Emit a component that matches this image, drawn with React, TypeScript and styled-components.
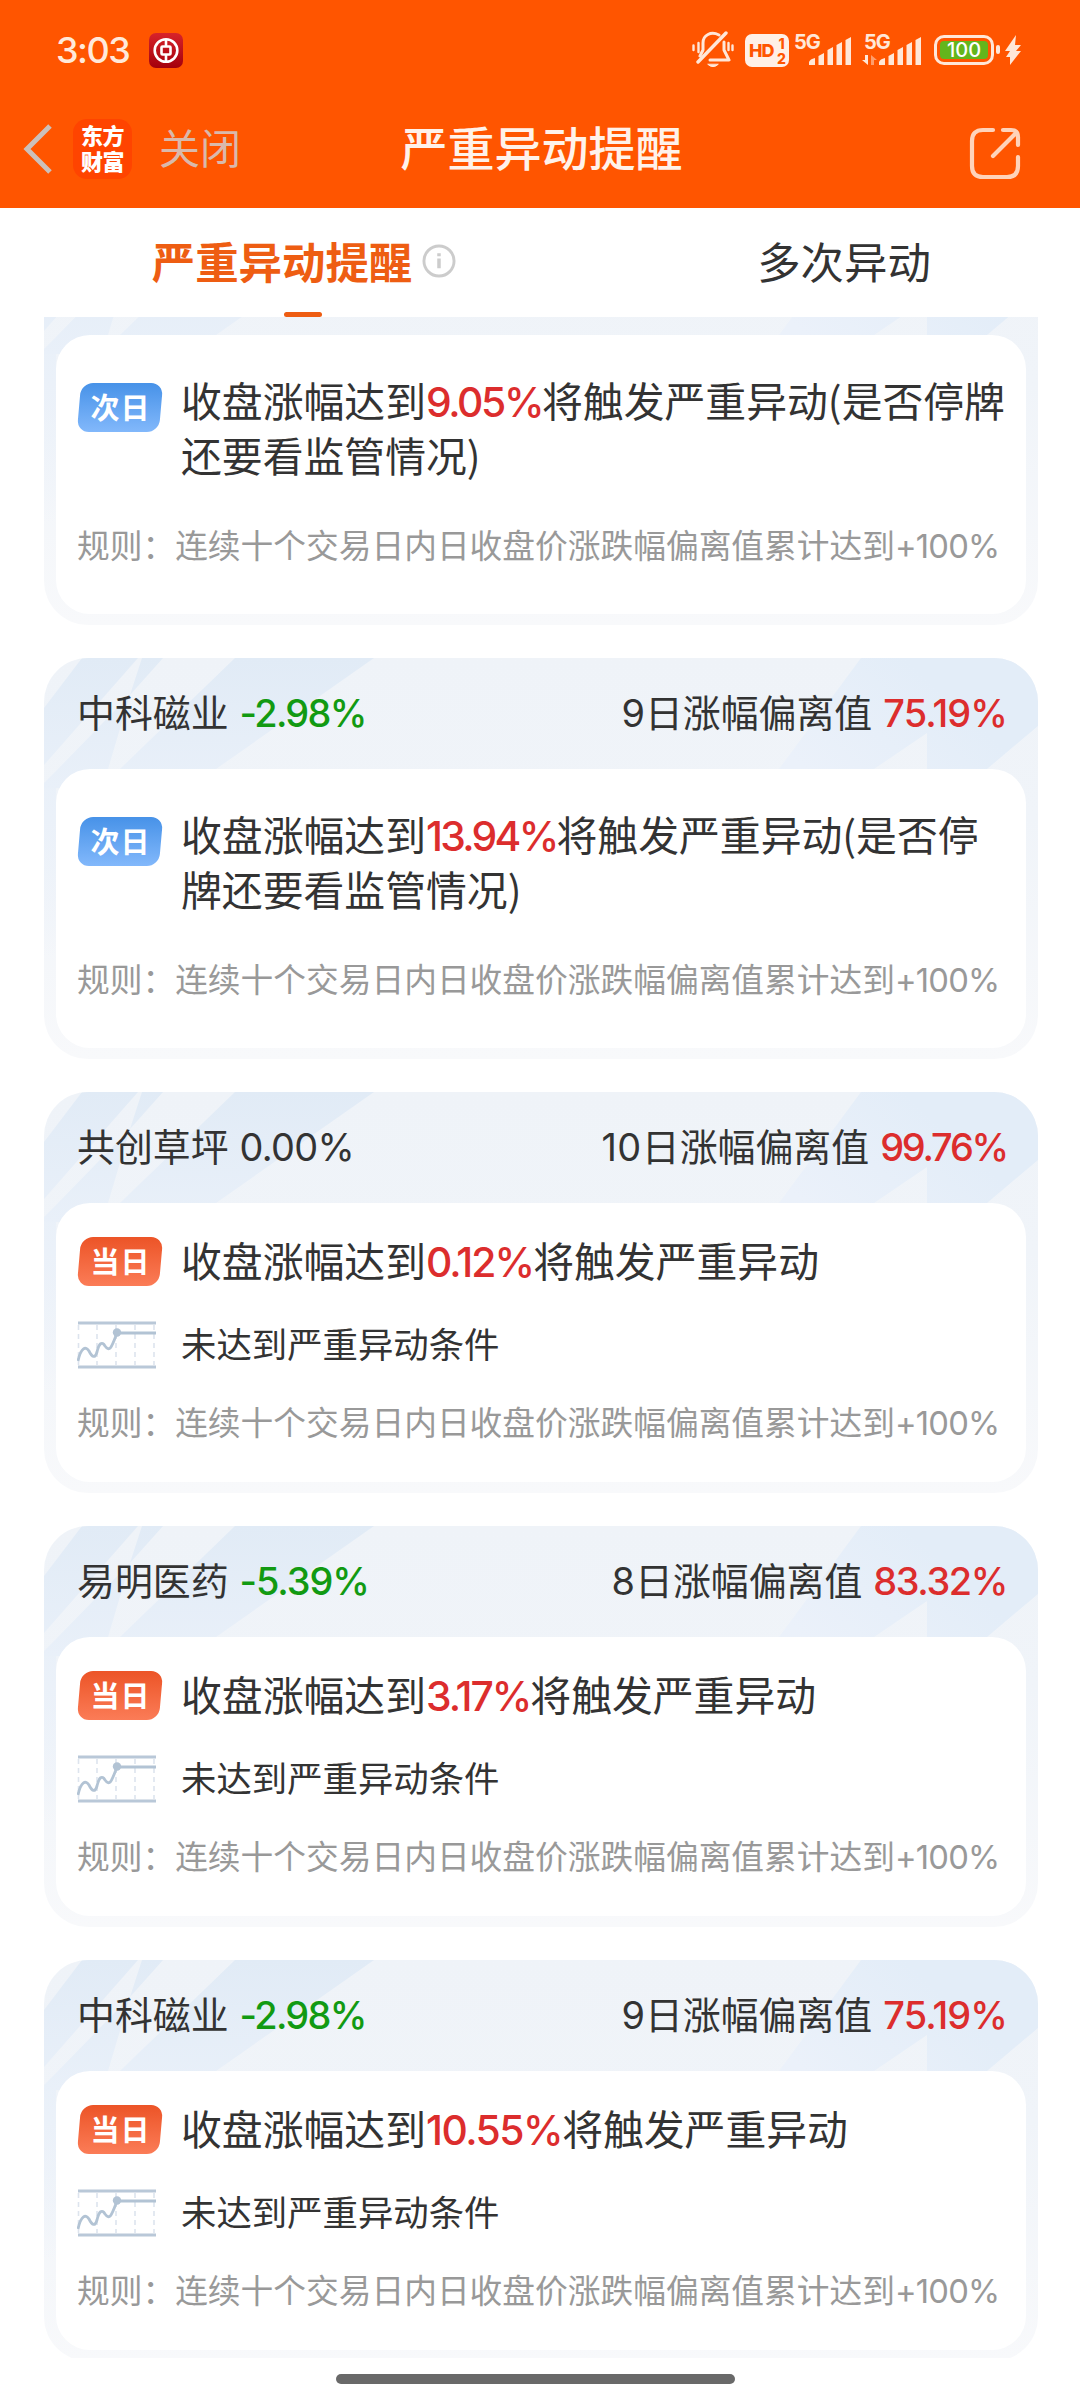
import React from "react";
import styled, { createGlobalStyle } from "styled-components";

const GlobalStyle = createGlobalStyle`
  * { box-sizing: border-box; }
  body {
    margin: 0;
    background: #fff;
    color: #333;
    font-family: "Noto Sans CJK SC", sans-serif;
  }
`;

const latin = `Inter, "Noto Sans CJK SC", sans-serif`;

const Screen = styled.div`
  width: 1080px;
  height: 2400px;
  display: flex;
  flex-direction: column;
  overflow: hidden;
  background: #fff;
`;

const Header = styled.header`
  height: 208px;
  flex: none;
  background: #ff5500;
  color: #fff0e6;
`;

const StatusBar = styled.div`
  height: 100px;
  display: flex;
  align-items: center;
  justify-content: space-between;
  padding: 0 59px 0 56px;
`;

const StatusSide = styled.div`
  display: flex;
  align-items: center;
`;

const Clock = styled.span`
  width: 93px;
  font: 500 36px/50px ${latin};
  letter-spacing: -1.5px;
  color: #ffe9da;
`;

const NavBar = styled.div`
  height: 108px;
  display: grid;
  grid-template-columns: 1fr auto 1fr;
  align-items: center;
  padding: 0 21px 0 22px;
`;

const NavLeft = styled.div`
  display: flex;
  align-items: center;
  margin-top: -10px;
`;

const AppBadge = styled.div`
  width: 59px;
  height: 60px;
  margin-left: 20px;
  border-radius: 14px;
  background: #ff4400;
  color: #fff;
  display: flex;
  flex-direction: column;
  align-items: center;
  justify-content: center;
  font-size: 22px;
  line-height: 26px;
  font-weight: 900;
  letter-spacing: -0.4px;
  padding-bottom: 4px;
`;

const CloseText = styled.span`
  margin: -6px 0 0 27px;
  font-size: 41px;
  line-height: 60px;
  color: #d9b9ab;
`;

const Title = styled.h1`
  margin: -17px 0 0 2px;
  font-size: 47px;
  line-height: 64px;
  font-weight: 500;
  color: #fff2ea;
`;

const NavRight = styled.div`
  display: flex;
  justify-content: flex-end;
  padding-right: 37px;
`;

const Tabs = styled.nav`
  height: 109px;
  flex: none;
  display: grid;
  grid-template-columns: 606px 1fr;
`;

const Tab = styled.div<{ $active?: boolean }>`
  display: flex;
  flex-direction: column;
  justify-content: space-between;
  align-items: center;
  padding-top: 20px;
  font-size: 43.4px;
  line-height: 64px;
  font-weight: ${(p) => (p.$active ? 700 : 400)};
  color: ${(p) => (p.$active ? "#ee5d12" : "#333")};
`;

const TabLabel = styled.div`
  display: flex;
  align-items: center;
  gap: 10px;
  padding-left: 2px;

  svg { margin-top: 2px; }
`;

const TabLine = styled.i`
  width: 38px;
  height: 5px;
  border-radius: 3px;
  background: #ee5d12;
`;

const ScrollArea = styled.main`
  height: 2041px;
  flex: none;
  overflow: hidden;
  padding: 0 42px 0 44px;
`;

const List = styled.div`
  margin-top: -93px;
  display: flex;
  flex-direction: column;
  gap: 33px;
`;

const Card = styled.section`
  position: relative;
  height: 401px;
  flex: none;
  display: flex;
  flex-direction: column;
  padding: 0 12px 11px;
  border-radius: 44px;
  overflow: hidden;
  background: linear-gradient(#eff3f8 0%, #f0f4f9 40%, #f8f9fb 100%);
`;

const Shards = styled.svg`
  position: absolute;
  left: 0;
  top: 0;
`;

const CardHead = styled.div`
  position: relative;
  height: 111px;
  display: flex;
  align-items: center;
  justify-content: space-between;
  padding: 0 19px 6px 21px;
  font-size: 37.9px;
`;

const HeadText = styled.div`
  display: flex;
  align-items: baseline;
`;

const Num = styled.span<{ $color?: string; $weight?: number; $track?: number; $gap?: number }>`
  font-family: ${latin};
  font-weight: ${(p) => p.$weight ?? 400};
  letter-spacing: ${(p) => p.$track ?? -1}px;
  margin-left: ${(p) => p.$gap ?? 0}px;
  line-height: 1;
  color: ${(p) => p.$color ?? "inherit"};
`;

const Inner = styled.div<{ $today: boolean }>`
  position: relative;
  flex: 1;
  padding: ${(p) => (p.$today ? 29 : 37)}px 0 0 21px;
  border-radius: 34px;
  background: #fff;
`;

const Row = styled.div`
  display: flex;
  align-items: flex-start;
`;

const BadgeBox = styled.div<{ $today: boolean }>`
  position: relative;
  width: 86px;
  height: 49px;
  flex: none;
  margin: ${(p) => (p.$today ? 5 : 11)}px 18px 0 0;
  display: flex;
  align-items: center;
  justify-content: center;
  color: #fff;
  font-size: 29px;
  line-height: 40px;
  font-weight: 700;
  letter-spacing: 1px;
  padding: 0 0 4px 1px;

  &::before {
    content: "";
    position: absolute;
    inset: 0 2px;
    border-radius: 12px;
    transform: skewX(-5deg);
    background: ${(p) => (p.$today ? "linear-gradient(#ec5427, #fb7c57)" : "linear-gradient(#4792e8, #82b8fb)")};
  }

  span { position: relative; }
`;

const Message = styled.p`
  margin: 0;
  font-size: 40.85px;
  line-height: 55px;
  white-space: nowrap;
`;

const SubRow = styled.div`
  display: flex;
  align-items: center;
  height: 60px;
  margin-top: 28px;
  font-size: 35.4px;
  line-height: 50px;

  span { margin-top: -5px; }
`;

const ChartIcon = styled.svg`
  margin-right: 25px;
`;

const Rule = styled.div<{ $today: boolean }>`
  margin-top: ${(p) => (p.$today ? 22 : 38)}px;
  font-size: 32.72px;
  line-height: 48px;
  color: #999;
  white-space: nowrap;
`;

const HomeBar = styled.div`
  width: 399px;
  height: 10px;
  margin: 16px 0 0 336px;
  border-radius: 5px;
  background: #696969;
`;

interface Head {
  name: string;
  change: string;
  changeTrack: number;
  days: string;
  value: string;
  valueTrack: number;
}

interface Alert {
  head?: Head;
  today: boolean;
  pct: string;
  track: number;
  lines: [string, string?];
}

const zhongke: Head = { name: "中科磁业", change: "-2.98%", changeTrack: -1.7, days: "9", value: "75.19%", valueTrack: -0.9 };

const alerts: Alert[] = [
  { today: false, pct: "9.05%", track: -2.4, lines: ["将触发严重异动(是否停牌", "还要看监管情况)"] },
  { head: zhongke, today: false, pct: "13.94%", track: -2.7, lines: ["将触发严重异动(是否停", "牌还要看监管情况)"] },
  {
    head: { name: "共创草坪", change: "0.00%", changeTrack: -0.7, days: "10", value: "99.76%", valueTrack: -2.2 },
    today: true, pct: "0.12%", track: -1.9, lines: ["将触发严重异动"],
  },
  {
    head: { name: "易明医药", change: "-5.39%", changeTrack: -1.1, days: "8", value: "83.32%", valueTrack: -1.4 },
    today: true, pct: "3.17%", track: -2, lines: ["将触发严重异动"],
  },
  { head: zhongke, today: true, pct: "10.55%", track: -1.5, lines: ["将触发严重异动"] },
];

const CardShards = () => (
  <Shards width="994" height="401" viewBox="0 0 994 401">
    <defs>
      <linearGradient id="shard" x1="0" y1="0" x2="0" y2="130" gradientUnits="userSpaceOnUse">
        <stop offset="0" stopColor="#e1ebf6" />
        <stop offset="1" stopColor="#e9f0f9" />
      </linearGradient>
      <linearGradient id="fade" x1="760" y1="111" x2="860" y2="0" gradientUnits="userSpaceOnUse">
        <stop offset="0" stopColor="#ebf1fa" />
        <stop offset="1" stopColor="#e3edf8" />
      </linearGradient>
      <linearGradient id="edge" x1="0" y1="107" x2="0" y2="300" gradientUnits="userSpaceOnUse">
        <stop offset="0" stopColor="#e9f0f9" />
        <stop offset="1" stopColor="#e9f0f9" stopOpacity="0" />
      </linearGradient>
    </defs>
    <g fill="url(#shard)">
      <path d="M38 0H94L0 107V50Z" />
      <path d="M98 0H119L86 37Z" />
      <path d="M86 37L64 111V130H0V125L14 111Z" />
      <path d="M191 0H330L172 111H76Z" />
    </g>
    <path d="M817 0H994V68L943 111H883V75L830 111H735Z" fill="url(#fade)" />
    <path d="M0 130H12V300H0Z" fill="url(#edge)" />
  </Shards>
);

const TrendIcon = () => (
  <ChartIcon width="79" height="48" viewBox="0 0 79 48" fill="none">
    <path d="M1.500 4V44M20 4V44M39 4V44M58 4V44M77 4V44" stroke="#dde4ee" strokeWidth="1.600" strokeDasharray="5 4" />
    <path d="M1 2H79M1 46H79" stroke="#b9c8d8" strokeWidth="2.800" />
    <path d="M1 40C4 26 9 25 12 30C15 36 18 38 20 31C22 22 25 20 28 25C33 32 35 25 40 12H79" stroke="#b2c3d4" strokeWidth="2.800" />
    <circle cx="40" cy="11.500" r="4.200" fill="#b2c3d4" />
  </ChartIcon>
);

const BellOff = () => (
  <svg width="42" height="38" viewBox="0 0 42 38" fill="none" stroke="#ffe7d8" strokeWidth="3" strokeLinecap="round" strokeLinejoin="round">
    <path d="M27 4C19 0 11 4 11 12V19L8 25M32 11V19L37 29H18" />
    <path d="M34 2L6 31" strokeWidth="3.400" />
    <path d="M6.500 12V21M1.500 14.500V19M36.500 12V19M40.500 14.500V19" strokeWidth="2.400" />
    <path d="M16 33.500Q21 38 26 33.500Z" fill="#ffe7d8" strokeWidth="1" />
  </svg>
);

const HdBox = styled.div`
  position: relative;
  width: 44px;
  height: 33px;
  margin-left: 11px;
  padding-left: 4px;
  border-radius: 7px;
  background: #fff0e6;
  color: #ff5500;
  font: 800 18px/34px ${latin};
  letter-spacing: -1px;
`;

const HdLines = styled.span`
  position: absolute;
  right: 2px;
  top: 2px;
  width: 11px;
  font-size: 14px;
  line-height: 15px;
  text-align: center;
  letter-spacing: 0;
`;

const SignalBox = styled.div<{ $gap: number }>`
  position: relative;
  width: 58px;
  height: 34px;
  margin-left: ${(p) => p.$gap}px;
  color: #ffe7d8;
  font: 700 20px/18px ${latin};
  letter-spacing: -1px;

  svg { position: absolute; left: 0; top: 0; overflow: visible; }
`;

const Signal = ({ gap, data }: { gap: number; data?: boolean }) => (
  <SignalBox $gap={gap}>
    5G
    <svg width="58" height="34" viewBox="0 0 58 34" fill="#ffe7d8">
      <path d="M15 32V29Q16 26 21 25V32ZM24.500 32V23L30 20V32ZM33.500 32V17L39 14V32ZM42.500 32V12L48 9V32ZM51.500 32V7L57 4V32Z" />
      {data && <path d="M4 22V32L-2 27H1V22Z" />}
      {data && <path d="M7 32V22L13 27H10V32Z" opacity="0.5" />}
    </svg>
  </SignalBox>
);

const Battery = styled.div`
  width: 60px;
  height: 30px;
  margin-left: 12px;
  border: 3px solid #ffe7d8;
  border-radius: 10px;
  padding: 3px;
`;

const BatteryFill = styled.div`
  height: 18px;
  border-radius: 4px;
  background: #63b51c;
  color: #fff;
  text-align: center;
  font: 500 20px/18px ${latin};
`;

export default function App() {
  return (
    <Screen lang="zh-CN">
      <GlobalStyle />
      <Header>
        <StatusBar>
          <StatusSide>
            <Clock>3:03</Clock>
            <svg width="34" height="35" viewBox="0 0 34 35" fill="none" stroke="#fff" strokeWidth="2.600">
              <defs>
                <linearGradient id="bank" x1="0" y1="0" x2="0" y2="1">
                  <stop offset="0" stopColor="#d8232a" />
                  <stop offset="1" stopColor="#a3000c" />
                </linearGradient>
              </defs>
              <rect width="34" height="35" rx="7" fill="url(#bank)" stroke="none" />
              <circle cx="17" cy="17.500" r="11.300" />
              <rect x="12.500" y="13.500" width="9" height="8" rx="1" />
              <path d="M17 6V13M17 22V29" />
            </svg>
          </StatusSide>
          <StatusSide>
            <BellOff />
            <HdBox>
              HD
              <HdLines>1<br />2</HdLines>
            </HdBox>
            <Signal gap={5} />
            <Signal gap={12} data />
            <Battery>
              <BatteryFill>100</BatteryFill>
            </Battery>
            <svg width="27" height="32" viewBox="0 0 27 32" fill="#ffe7d8">
              <rect x="2" y="11" width="4" height="9" rx="2" />
              <path d="M22 1L11 17H16L12 23H16L16 31L27 17H22L27 11H21Z" />
            </svg>
          </StatusSide>
        </StatusBar>
        <NavBar>
          <NavLeft>
            <svg width="31" height="52" viewBox="0 0 31 52" fill="none" stroke="#ccc0ba" strokeWidth="5">
              <path d="M28 3L5 26L28 49" />
            </svg>
            <AppBadge>
              <span>东方</span>
              <span>财富</span>
            </AppBadge>
            <CloseText>关闭</CloseText>
          </NavLeft>
          <Title>严重异动提醒</Title>
          <NavRight>
            <svg width="54" height="54" viewBox="0 0 54 54" fill="none" stroke="#ffd3ba" strokeWidth="4.200" strokeLinecap="round">
              <path d="M25 3H15Q4 3 4 14V39Q4 50 15 50H39Q50 50 50 39V30" />
              <path d="M35 3H43Q50 3 50 10V18M25 29L48 6" />
            </svg>
          </NavRight>
        </NavBar>
      </Header>

      <Tabs>
        <Tab $active>
          <TabLabel>
            严重异动提醒
            <svg width="34" height="34" viewBox="0 0 35 35" fill="none" stroke="#ccc" strokeWidth="3">
              <circle cx="17.500" cy="17.500" r="15.500" />
              <path d="M17.500 15V25M17.500 9.500V12.500" strokeWidth="3.600" />
            </svg>
          </TabLabel>
          <TabLine />
        </Tab>
        <Tab>
          <TabLabel>多次异动</TabLabel>
        </Tab>
      </Tabs>

      <ScrollArea>
        <List>
          {alerts.map((a, i) => (
            <Card key={i}>
              <CardShards />
              <CardHead>
                {a.head && (
                  <>
                    <HeadText>
                      {a.head.name}
                      <Num
                        $gap={11}
                        $track={a.head.changeTrack}
                        $weight={a.head.change.startsWith("-") ? 500 : 400}
                        $color={a.head.change.startsWith("-") ? "#129a12" : undefined}
                      >
                        {a.head.change}
                      </Num>
                    </HeadText>
                    <HeadText>
                      <Num $track={a.head.days.length > 1 ? 0.5 : 0}>{a.head.days}</Num>
                      日涨幅偏离值
                      <Num $gap={11} $weight={500} $track={a.head.valueTrack} $color="#dc2d2d">{a.head.value}</Num>
                    </HeadText>
                  </>
                )}
              </CardHead>
              <Inner $today={a.today}>
                <Row>
                  <BadgeBox $today={a.today}>
                    <span>{a.today ? "当日" : "次日"}</span>
                  </BadgeBox>
                  <Message>
                    收盘涨幅达到
                    <Num $color="#dc2d2d" $weight={500} $track={a.track}>{a.pct}</Num>
                    {a.lines[0]}
                    {a.lines[1] && <><br />{a.lines[1]}</>}
                  </Message>
                </Row>
                {a.today && (
                  <SubRow>
                    <TrendIcon />
                    <span>未达到严重异动条件</span>
                  </SubRow>
                )}
                <Rule $today={a.today}>
                  规则：连续十个交易日内日收盘价涨跌幅偏离值累计达到
                  <Num $track={-0.8}>+100%</Num>
                </Rule>
              </Inner>
            </Card>
          ))}
        </List>
      </ScrollArea>
      <HomeBar />
    </Screen>
  );
}
